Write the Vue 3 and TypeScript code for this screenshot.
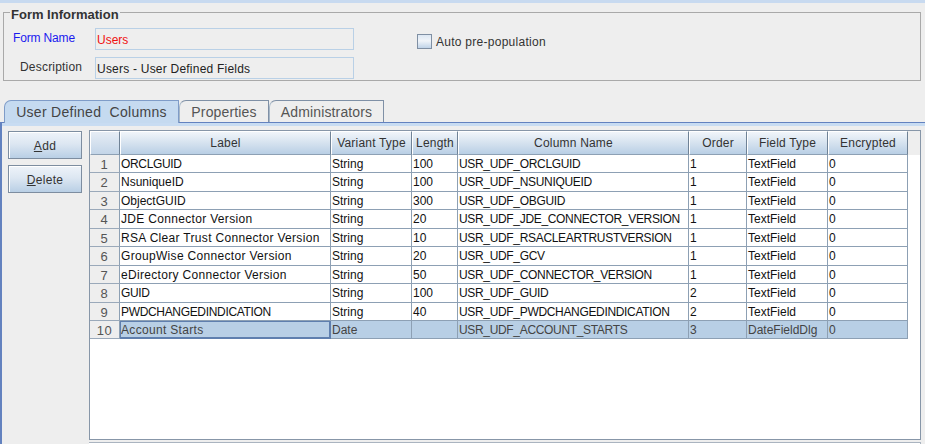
<script setup lang="ts">
const headers = ['Label', 'Variant Type', 'Length', 'Column Name', 'Order', 'Field Type', 'Encrypted']
const rows: string[][] = [
  ['ORCLGUID', 'String', '100', 'USR_UDF_ORCLGUID', '1', 'TextField', '0'],
  ['NsuniqueID', 'String', '100', 'USR_UDF_NSUNIQUEID', '1', 'TextField', '0'],
  ['ObjectGUID', 'String', '300', 'USR_UDF_OBGUID', '1', 'TextField', '0'],
  ['JDE Connector Version', 'String', '20', 'USR_UDF_JDE_CONNECTOR_VERSION', '1', 'TextField', '0'],
  ['RSA Clear Trust Connector Version', 'String', '10', 'USR_UDF_RSACLEARTRUSTVERSION', '1', 'TextField', '0'],
  ['GroupWise Connector Version', 'String', '20', 'USR_UDF_GCV', '1', 'TextField', '0'],
  ['eDirectory Connector Version', 'String', '50', 'USR_UDF_CONNECTOR_VERSION', '1', 'TextField', '0'],
  ['GUID', 'String', '100', 'USR_UDF_GUID', '2', 'TextField', '0'],
  ['PWDCHANGEDINDICATION', 'String', '40', 'USR_UDF_PWDCHANGEDINDICATION', '2', 'TextField', '0'],
  ['Account Starts', 'Date', '', 'USR_UDF_ACCOUNT_STARTS', '3', 'DateFieldDlg', '0'],
]

function textClass(value: string): string {
  if (value.includes(' ')) return 'wide'
  if (/^[A-Z_]+$/.test(value)) return 'caps'
  return ''
}
</script>

<template>
  <div class="page">
    <div class="strip"></div>
    <fieldset class="info">
      <legend>Form Information</legend>
      <div class="info-grid">
        <label class="lbl req">Form Name</label>
        <div class="field red">Users</div>
        <div class="check"><span class="box"></span><span>Auto pre-population</span></div>
        <label class="lbl desc">Description</label>
        <div class="field wide-text">Users - User Defined Fields</div>
      </div>
    </fieldset>

    <div class="tabs">
      <div class="tab active">User Defined&nbsp; Columns</div>
      <div class="tab">Properties</div>
      <div class="tab">Administrators</div>
    </div>

    <div class="panel">
      <div class="buttons">
        <button class="btn"><u>A</u>dd</button>
        <button class="btn"><u>D</u>elete</button>
      </div>
      <div class="pane-wrap">
        <div class="pane">
          <div class="grid">
            <div class="hcell corner"></div>
            <div v-for="h in headers" :key="h" class="hcell">{{ h }}</div>
            <div class="hfill"></div>
            <template v-for="(r, i) in rows" :key="i">
              <div class="rowhead">{{ i + 1 }}</div>
              <div
                v-for="(c, j) in r"
                :key="j"
                class="cell"
                :class="[textClass(c), { sel: i === 9, focus: i === 9 && j === 0 }]"
              >{{ c }}</div>
            </template>
          </div>
        </div>
        <div class="pane-foot"></div>
      </div>
    </div>
  </div>
</template>

<style scoped>
.page {
  width: 925px;
  height: 444px;
  overflow: hidden;
  background: #eeeeee;
  font-family: "Liberation Sans", Arial, sans-serif;
  font-size: 12px;
  color: #222;
  display: flex;
  flex-direction: column;
}
.strip {
  height: 3px;
  background: #c8daf0;
  flex: none;
}
.info {
  flex: none;
  margin: 0 4px 0 3px;
  padding: 0;
  height: 78px;
  box-sizing: border-box;
  border: 1px solid #a9a9a9;
  min-width: 0;
}
.info legend {
  margin-left: 6px;
  padding: 4px 1px 0;
  font-size: 13px;
  font-weight: bold;
  color: #333;
  line-height: 15px;
}
.info-grid {
  display: grid;
  grid-template-columns: 91px 259px 1fr;
  grid-template-rows: 22px 22px;
  row-gap: 7px;
  margin-top: 6px;
  align-items: center;
}
.lbl {
  font-size: 12px;
  line-height: 14px;
}
.req {
  color: #1a1aee;
  padding-left: 9px;
  margin-top: -3px;
  letter-spacing: -0.15px;
}
.desc {
  padding-left: 16px;
  color: #333;
  margin-top: -3px;
  letter-spacing: 0.2px;
}
.field {
  height: 22px;
  box-sizing: border-box;
  border: 1px solid #b9d0e6;
  background: #eeeeee;
  padding-left: 1px;
  line-height: 22px;
  color: #222;
}
.wide-text {
  letter-spacing: 0.22px;
}
.red {
  color: #f01010;
}
.check {
  display: flex;
  align-items: center;
  gap: 4px;
  margin-left: 63px;
  margin-top: 5px;
  color: #333;
  letter-spacing: 0.27px;
}
.box {
  width: 15px;
  height: 15px;
  box-sizing: border-box;
  border: 1px solid #7f8fa3;
  background: linear-gradient(#dce7f3, #f0f4f9 45%, #bfd3e8);
}
.tabs {
  flex: none;
  display: flex;
  margin-top: 19px;
  padding-left: 4px;
  height: 22px;
}
.tab {
  box-sizing: border-box;
  height: 22px;
  padding-top: 3px;
  border: 1px solid #7f90a6;
  border-left-color: #a8b8c8;
  border-bottom: none;
  border-radius: 7px 0 0 0;
  text-align: center;
  font-size: 14px;
  line-height: 17px;
  letter-spacing: 0.15px;
  color: #555;
  background: #eeeeee;
  width: 90px;
}
.tab:last-child {
  width: 115px;
}
.tab.active {
  width: 175px;
  height: 23px;
  position: relative;
  z-index: 1;
  background: #c5daf0;
  border-color: #7f9cc8;
  color: #444;
  letter-spacing: 0.28px;
}
.panel {
  flex: 1;
  min-height: 0;
  display: flex;
  border-top: 1px solid #6382bf;
  border-left: 2px solid #6382bf;
  padding: 7px 4px 0 6px;
  background: linear-gradient(#c8dcf2, #c8dcf2) no-repeat 0 0 / 100% 3px;
}
.buttons {
  flex: none;
  width: 74px;
  margin-right: 7px;
  margin-top: 1px;
  display: flex;
  flex-direction: column;
  gap: 6px;
}
.btn {
  height: 28px;
  padding: 1px 0 0;
  border: 1px solid #7d8da0;
  background: linear-gradient(#eef3f9, #dde7f2 45%, #b9cfe5);
  box-shadow: inset 1px 1px 0 #ffffff;
  font: inherit;
  letter-spacing: 0.3px;
  color: #333;
}
.pane-wrap {
  flex: 1;
  min-width: 0;
  display: flex;
  flex-direction: column;
}
.pane {
  height: 310px;
  box-sizing: border-box;
  border: 1px solid #8796a8;
  background: #ffffff;
  flex: none;
}
.pane-foot {
  margin-top: 2px;
  flex: 1;
  background: #ffffff;
  border-top: 1px solid #aab4c0;
  border-right: 1px solid #aab4c0;
}
.grid {
  display: grid;
  grid-template-columns: 30px 211px 81px 46px 231px 58px 81px 80px 1fr;
  grid-template-rows: 24px repeat(10, 18.44px);
}
.hcell {
  box-sizing: border-box;
  border-left: 1px solid #ffffff;
  border-top: 1px solid #ffffff;
  border-right: 1px solid #6f8296;
  border-bottom: 1px solid #8da0b4;
  background: linear-gradient(#f1f5fa, #d8e4f0 45%, #b9cfe5);
  text-align: center;
  line-height: 22px;
  letter-spacing: 0.2px;
  color: #333;
  white-space: nowrap;
  overflow: hidden;
}
.hfill {
  background: #eeeeee;
}
.corner {
  background: linear-gradient(#e6edf5, #c3d5e8);
}
.rowhead {
  grid-column: 1;
  box-sizing: border-box;
  background: #eeeeee;
  border-right: 1px solid #8da0b4;
  border-bottom: 1px solid #9aa9ba;
  text-align: center;
  font-size: 13px;
  letter-spacing: 0.6px;
  line-height: 19px;
  color: #555;
}
.cell {
  box-sizing: border-box;
  border-right: 1px solid #8da0b4;
  border-bottom: 1px solid #8da0b4;
  padding: 1px 0 0 1px;
  line-height: 17px;
  white-space: nowrap;
  overflow: hidden;
  color: #111;
}
.wide {
  letter-spacing: 0.32px;
}
.caps {
  letter-spacing: -0.33px;
}
.sel {
  background: #b8cfe5;
  color: #444;
}
.focus {
  border: 1px solid #5f7fae;
  border-width: 1px 2px 2px 1px;
  padding: 0;
  line-height: 16px;
}
</style>

<style>
html, body { margin: 0; padding: 0; background: #eeeeee; }
</style>
